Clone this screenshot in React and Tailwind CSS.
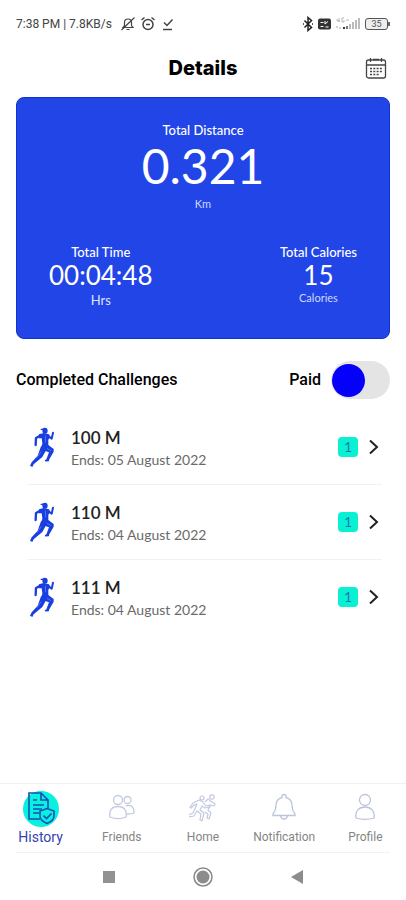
import React from "react";

const challenges = [
  { name: "100 M", ends: "Ends: 05 August 2022", count: 1 },
  { name: "110 M", ends: "Ends: 04 August 2022", count: 1 },
  { name: "111 M", ends: "Ends: 04 August 2022", count: 1 },
];

function StatusBar() {
  return (
    <div className="flex h-12 items-center justify-between px-4 text-[#444]">
      <div className="flex items-center gap-1">
        <span className="mr-1 font-[Roboto,sans-serif] text-xs whitespace-nowrap">7:38 PM | 7.8KB/s</span>
        <svg className="size-4" viewBox="0 0 16 16" fill="none" stroke="currentColor" strokeWidth="1.2">
          <path d="M3 11.500h10l-1.500-2V6.500C11.500 4.500 10 3 8 3S4.500 4.500 4.500 6.500v3zM6.500 13.500h3M14.500 1.500 1.500 14" />
        </svg>
        <svg className="size-4" viewBox="0 0 16 16" fill="none" stroke="currentColor" strokeWidth="1.500">
          <circle cx="8" cy="8.500" r="5" />
          <path d="M6 8.500h4M1.500 4 4.500 1.500M14.500 4l-3-2.500" />
        </svg>
        <svg className="size-4" viewBox="0 0 16 16" fill="none" stroke="currentColor" strokeWidth="1.500">
          <path d="m4 6.500 3 3 5.500-6M3 13.500h9" />
        </svg>
      </div>
      <div className="flex items-center gap-1">
        <svg className="h-4 w-3" viewBox="0 0 12 16" fill="none" stroke="#222" strokeWidth="1.500">
          <path d="m2.500 4.500 7 7L6 14.500v-13l3.500 3-7 7M1 8h1M10 8h1" />
        </svg>
        <svg className="h-4 w-[13px]" viewBox="0 0 13 16">
          <rect y="2.500" width="13" height="11" rx="2" fill="#333" />
          <path d="M2.500 6.500h3M7 5v3l3-2.500M2.500 10.500h3M7.500 11h3" stroke="#fff" fill="none" />
        </svg>
        <svg className="h-4 w-[26px]" viewBox="0 0 26 16">
          <path d="M2 3v2h3M4 2v4M9 2H7v4h2V4M11 4h3" stroke="#aaa" fill="none" strokeWidth=".8" />
          <path d="M1 11h2M4 12h2" stroke="#aaa" />
          <path d="M8 11h2v2H8z" fill="#333" />
          <path d="M11 10h2v3h-2z" fill="#777" />
          <path d="M14 8h2v5h-2zM17 6h2v7h-2zM20 4h2v9h-2zM23 2h2v11h-2z" fill="#bbb" />
        </svg>
        <div className="flex items-center">
          <span className="flex h-3 w-[23px] items-center justify-center rounded-[3px] border border-[#555] bg-[#eee] font-[Roboto,sans-serif] text-[9px] leading-none text-[#555]">
            35
          </span>
          <span className="h-1 w-[2px] bg-[#666]" />
        </div>
      </div>
    </div>
  );
}

function CalendarIcon() {
  return (
    <svg className="size-[22px]" viewBox="0 0 22 22" fill="none" stroke="#444" strokeWidth="1.300">
      <rect x="1.500" y="3" width="19" height="18" rx="2" />
      <path d="M1.500 8h19M5.500 1v4M16.500 1v4M8 2.500h6" />
      <path d="M5 11.500h12M5 14.500h12M5 17.500h9" strokeDasharray="2 1.300" />
    </svg>
  );
}

function RunnerIcon() {
  return (
    <svg className="h-10 w-7" viewBox="30 24 84 120" aria-hidden="true">
      <g fill="#1a3fe0">
        <ellipse cx="78" cy="35" rx="8" ry="9" />
        <path d="M64 30 76 28v5H66z" />
        <path d="M60 46 74 42 90 46 94 54 88 62 88 86 68 88 70 72 68 58 58 58z" />
        <path d="m66 80 22-2 16 12v8L88 126l-7-2 9-24-18-6z" />
        <path d="M66 82 82 92 70 114 44 136 40 144 33 140 38 130 56 110z" />
      </g>
      <g fill="none" stroke="#1a3fe0" strokeLinejoin="round" strokeLinecap="round">
        <path d="M66 49 51 57 50 78" strokeWidth="7" />
        <path d="m88 51 10 8 4-18" strokeWidth="6" />
        <path d="m88 124-8 1" strokeWidth="5" />
      </g>
      <path d="m79 50 1 20M66 98l-12 18M84 88l12 7" stroke="#6f8cff" strokeWidth="2" fill="none" />
    </svg>
  );
}

function Stat({ label, value, unit, unitClass }) {
  return (
    <div className="flex flex-col items-center">
      <span className="text-[13px] leading-4 font-medium">{label}</span>
      <span className="text-[26px] leading-[30px]">{value}</span>
      <span className={unitClass}>{unit}</span>
    </div>
  );
}

function HistoryIcon() {
  return (
    <svg className="size-9" viewBox="0 0 36 36" fill="none" stroke="#174fb8" strokeWidth="1.600">
      <circle cx="18" cy="18" r="18" fill="#08f1de" stroke="none" />
      <path d="M17 28H6V2h12l7 7v8M18 2v7h7M10 9h4M10 14h11M10 18h9M10 22h6" />
      <path d="M24 17.500 31 20v5c0 4-3.500 6-7 7.500-3.500-1.500-7-3.500-7-7.500v-5z" fill="#08f1de" />
      <path d="m20.500 24.500 3 3 5-5" />
    </svg>
  );
}

function FriendsIcon() {
  return (
    <svg className="h-9 w-7" viewBox="0 0 28 36" fill="none" stroke="#c3c9e2" strokeWidth="1.300">
      <circle cx="10" cy="9" r="4.500" />
      <path d="M2 26c-1-7 2-10.500 8-10.500S19 19 18 26c-5 2-11 2-16 0z" />
      <circle cx="19.500" cy="9" r="3.500" />
      <path d="M17.500 15c5-2 9 1 8.500 7-2 1-4 1-7 1" />
    </svg>
  );
}

function RunnersIcon() {
  return (
    <svg className="h-9 w-7" viewBox="0 0 28 36" fill="none" stroke="#c3c9e2" strokeWidth="1.200" strokeLinejoin="round">
      <circle cx="13" cy="7" r="2" />
      <circle cx="23" cy="6" r="2.200" />
      <path d="m4 12 6-3 4 2 3 4 4-1v2l-5 1-3-2-2 4 4 3-2 8-2-1 1-6-4-3-3 5-6 1v-2l5-2 4-9-3 1-3 3-1-1z" />
      <path d="m16 11 3-3 4 3 3 2-1 2-4-1-2 5 3 3-2 6-2-1 1-4-3-2" />
    </svg>
  );
}

function BellIcon() {
  return (
    <svg className="h-9 w-7" viewBox="0 0 28 36" fill="none" stroke="#bcc4dc" strokeWidth="1.300">
      <path d="M12 6.500V5c0-2 4-2 4 0v1.500c4 1 6 4 6 8 0 5 1 6 3 8.500v1.500H3V23c2-2.500 3-3.500 3-8.500 0-4 2-7 6-8z" />
      <path d="M10.500 25c1 4 6 4 7 0" />
    </svg>
  );
}

function ProfileIcon() {
  return (
    <svg className="h-9 w-7" viewBox="0 0 28 36" fill="none" stroke="#bcc4dc" strokeWidth="1.300">
      <circle cx="14" cy="9" r="5.500" />
      <path d="M5 27c-1-7 3-11 9-11s10 4 9 11c-5 1.500-13 1.500-18 0z" />
    </svg>
  );
}

const tabs = [
  { label: "History", Icon: HistoryIcon, active: true },
  { label: "Friends", Icon: FriendsIcon },
  { label: "Home", Icon: RunnersIcon },
  { label: "Notification", Icon: BellIcon },
  { label: "Profile", Icon: ProfileIcon },
];

export default function App() {
  return (
    <div className="flex min-h-screen flex-col bg-white font-[Lato,sans-serif] text-black">
      <StatusBar />

      <header className="grid grid-cols-[1fr_auto_1fr] items-center px-4">
        <h1 className="col-start-2 font-[Inter,sans-serif] text-xl leading-10 font-extrabold">Details</h1>
        <button type="button" aria-label="Calendar" className="mr-[3px] justify-self-end">
          <CalendarIcon />
        </button>
      </header>

      <main className="flex-1 px-4">
        <section className="mt-[9px] rounded-lg border border-[#1131d0] bg-[#2245e8] px-8 pt-6 pb-7 text-white">
          <div className="flex flex-col items-center">
            <span className="text-[13px] leading-4 font-medium">Total Distance</span>
            <span className="text-5xl leading-14">0.321</span>
            <span className="mt-0.5 text-[11px] leading-4 text-[#cfd8ff]">Km</span>
          </div>
          <div className="mt-8 flex justify-between">
            <Stat label="Total Time" value="00:04:48" unit="Hrs" unitClass="text-[13px] leading-5 text-[#dde3ff]" />
            <Stat label="Total Calories" value="15" unit="Calories" unitClass="text-[11px] leading-4 text-[#cfd8ff]" />
          </div>
        </section>

        <div className="mt-[22px] flex items-center justify-between font-[Roboto,sans-serif] text-base font-medium">
          <h2>Completed Challenges</h2>
          <label className="flex items-center gap-[10px]">
            Paid
            <input
              type="checkbox"
              role="switch"
              className="flex h-[38px] w-[59px] appearance-none items-center rounded-full bg-[#e4e4e4] px-px before:size-[33px] before:rounded-full before:bg-[#0500fa] before:content-[''] checked:justify-end"
            />
          </label>
        </div>

        <ul className="mt-[11px] mr-2 ml-3">
          {challenges.map((c) => (
            <li key={c.name} className="border-b border-[#f1f1f1] last:border-0">
              <button type="button" className="flex h-[74px] w-full items-center pl-px text-left">
                <RunnerIcon />
                <span className="ml-[14px] flex flex-1 flex-col pt-[3px]">
                  <span className="text-[17px] leading-[22px] font-semibold text-[#222]">{c.name}</span>
                  <span className="text-sm leading-[22px] text-[#6a6a6a]">{c.ends}</span>
                </span>
                <span className="flex size-5 items-center justify-center rounded bg-[#08f1d3] text-sm text-[#1c78b4]">
                  {c.count}
                </span>
                <svg className="ml-2 h-4 w-4" viewBox="0 0 16 16" fill="none" stroke="#222" strokeWidth="2">
                  <path d="m4 1.500 7 6.500-7 6.500" />
                </svg>
              </button>
            </li>
          ))}
        </ul>
      </main>

      <nav className="border-t border-[#f0f0f0]">
        <ul className="grid grid-cols-5">
          {tabs.map(({ label, Icon, active }) => (
            <li key={label}>
              <a
                href="#"
                className={`flex h-[68px] flex-col items-center pt-[7px] font-[Roboto,sans-serif] ${
                  active ? "text-sm text-[#3443b5]" : "text-xs text-[#858585]"
                }`}
              >
                <Icon />
                <span className="leading-5">{label}</span>
              </a>
            </li>
          ))}
        </ul>
      </nav>

      <footer className="mx-4 flex h-12 items-center justify-center gap-[78px] border-t border-[#f3f3f3]">
        <button type="button" aria-label="Recent apps" className="size-3 bg-[#929292]" />
        <button type="button" aria-label="Home screen">
          <svg className="size-5" viewBox="0 0 20 20">
            <circle cx="10" cy="10" r="9" fill="none" stroke="#888" strokeWidth="1.500" />
            <circle cx="10" cy="10" r="6.500" fill="#8c8c8c" />
          </svg>
        </button>
        <button type="button" aria-label="Back">
          <svg className="h-[14px] w-3" viewBox="0 0 12 14">
            <path d="M12 0v14L0 7z" fill="#8c8c8c" />
          </svg>
        </button>
      </footer>
    </div>
  );
}
